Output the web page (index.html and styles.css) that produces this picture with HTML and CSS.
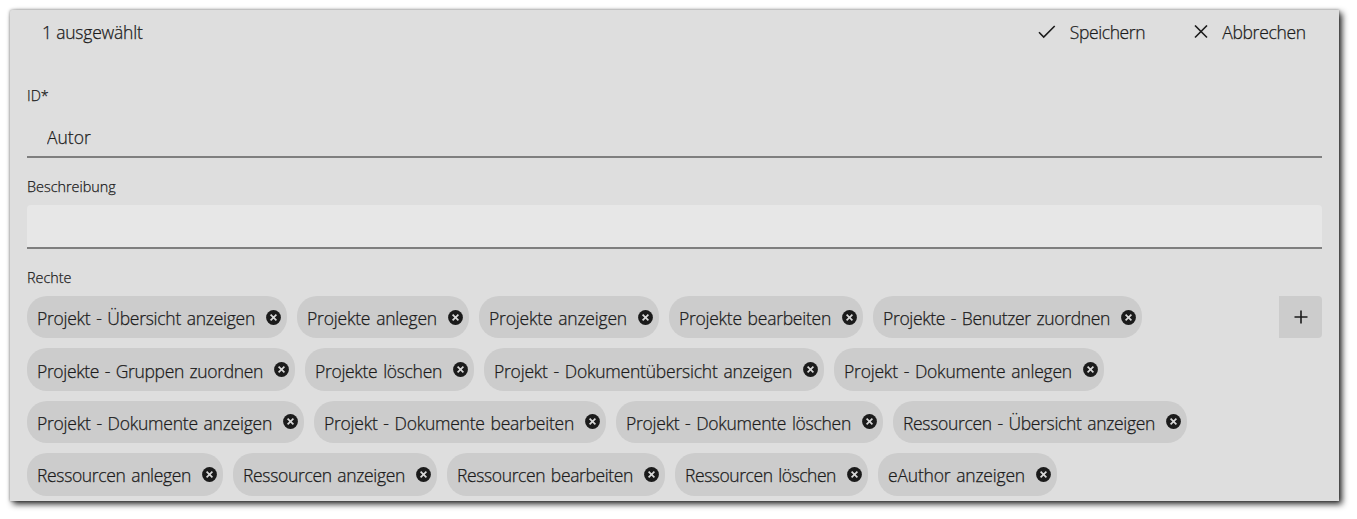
FILE: index.html
```html
<!DOCTYPE html>
<html lang="de">
<head>
    <meta charset="UTF-8">
    <meta name="viewport" content="width=device-width, initial-scale=1.0">
    <title>Autor</title>
    <link rel="stylesheet" href="styles.css">
</head>
<body>
    <svg class="sprite" width="0" height="0">
        <symbol id="remove" viewBox="0 0 15 15">
            <circle cx="7.5" cy="7.5" r="7.4" fill="#1b1b1b"/>
            <path d="M4.6 4.6l5.8 5.8M10.4 4.6l-5.8 5.8" stroke="#d8d8d8" stroke-width="1.7" fill="none"/>
        </symbol>
    </svg>

    <div class="panel">
        <div class="toolbar">
            <span class="selected">1 ausgewählt</span>
            <div class="actions">
                <button class="action">
                    <svg width="18" height="14" viewBox="0 0 18 14"><path d="M1 7.3l4.7 4.7L16.7 1"/></svg>
                    <span class="save">Speichern</span>
                </button>
                <button class="action">
                    <svg width="14" height="14" viewBox="0 0 14 14"><path d="M1 0.5l12 12M13 0.5L1 12.5"/></svg>
                    <span class="cancel">Abbrechen</span>
                </button>
            </div>
        </div>

        <div class="form">
            <label class="label" for="id">ID*</label>
            <input class="field readonly" id="id" value="Autor" readonly>

            <label class="label" for="description">Beschreibung</label>
            <input class="field" id="description">

            <div class="label">Rechte</div>
            <div class="rights">
                <div class="chips" id="chips"></div>
                <button class="add">
                    <svg width="14" height="14" viewBox="0 0 14 14"><path d="M7 0.5v13M0.5 7h13"/></svg>
                </button>
            </div>
        </div>
    </div>

    <script src="script.js"></script>
</body>
</html>
```
FILE: styles.css
```css
* {
    box-sizing: border-box;
}

body {
    margin: 0;
    padding: 10px 18px 18px 10px;
    height: 519px;
    overflow: hidden;
    background-color: #fff;
    color: #1b1b1b;
    font-family: "Open Sans", "Noto Sans", sans-serif;
    font-weight: 300;
    font-size: 17.5px;
    -webkit-text-stroke: 0.25px #1b1b1b;
}

.sprite {
    position: absolute;
}

.panel {
    height: 491px;
    background-color: #dedede;
    border-radius: 2px 0 0 0;
    box-shadow: 3px 3px 6px rgba(0, 0, 0, 0.85), 0 0 3px rgba(0, 0, 0, 0.4);
}

.toolbar {
    display: flex;
    justify-content: space-between;
    align-items: center;
    height: 44px;
    padding: 0 32px 0 32px;
}

.selected {
    letter-spacing: -0.2px;
}

.actions {
    display: flex;
    gap: 48px;
}

button {
    display: flex;
    align-items: center;
    padding: 0;
    border: none;
    background: none;
    color: inherit;
    font: inherit;
    cursor: pointer;
}

.action {
    gap: 13px;
}

.save {
    width: 77px;
    letter-spacing: -0.4px;
}

.cancel {
    width: 86px;
    letter-spacing: -0.3px;
}

button path {
    fill: none;
    stroke: #1b1b1b;
    stroke-width: 1.6;
}

.form {
    padding: 18px 17px 0;
}

.label {
    display: block;
    height: 47px;
    padding-top: 13px;
    font-size: 14.4px;
    line-height: 22px;
}

.form > .label:first-child {
    height: 42px;
}

.field + .label {
    padding-top: 18px;
}

.field {
    display: block;
    width: 100%;
    height: 44px;
    padding: 0 20px;
    border: none;
    border-bottom: 2px solid #7f7f7f;
    border-radius: 4px 4px 0 0;
    background-color: #e7e7e7;
    color: inherit;
    font: inherit;
    outline: none;
}

.field.readonly {
    padding-top: 4px;
    background-color: transparent;
}

.rights {
    display: flex;
    justify-content: space-between;
    align-items: flex-start;
}

.chips {
    display: flex;
    flex-direction: column;
    gap: 10px;
}

.chip-row {
    display: flex;
    gap: 10px;
}

.chip {
    display: flex;
    justify-content: space-between;
    align-items: center;
    height: 42.4px;
    padding: 0 6px 0 10px;
    border-radius: 20px;
    background-color: #cccccc;
    white-space: nowrap;
}

.chip svg {
    flex: none;
    width: 15px;
    height: 15px;
}

.chip span {
    padding-top: 2px;
    word-spacing: 1.5px;
}

.add {
    justify-content: center;
    width: 43px;
    height: 42px;
    border-radius: 0 4px 4px 0;
    background-color: #cccccc;
}
```
FILE: script.js
```js
// label and chip width in px
const rights = [
    [['Projekt - Übersicht anzeigen', 260], ['Projekte anlegen', 172], ['Projekte anzeigen', 180], ['Projekte bearbeiten', 194], ['Projekte - Benutzer zuordnen', 269]],
    [['Projekte - Gruppen zuordnen', 268], ['Projekte löschen', 169], ['Projekt - Dokumentübersicht anzeigen', 340], ['Projekt - Dokumente anlegen', 270]],
    [['Projekt - Dokumente anzeigen', 277], ['Projekt - Dokumente bearbeiten', 292], ['Projekt - Dokumente löschen', 267], ['Ressourcen - Übersicht anzeigen', 294]],
    [['Ressourcen anlegen', 196], ['Ressourcen anzeigen', 204], ['Ressourcen bearbeiten', 218], ['Ressourcen löschen', 193], ['eAuthor anzeigen', 179]]
];

const chips = document.getElementById('chips');

rights.forEach(items => {
    const row = document.createElement('div');
    row.className = 'chip-row';
    items.forEach(([label, width]) => {
        const chip = document.createElement('div');
        chip.className = 'chip';
        chip.style.width = `${width}px`;
        chip.innerHTML = `<span>${label}</span><svg><use href="#remove"/></svg>`;
        row.appendChild(chip);
    });
    chips.appendChild(row);
});

// spread each label so it ends 12px before its remove icon
document.querySelectorAll('.chip').forEach(chip => {
    const text = chip.firstChild;
    const space = chip.offsetWidth - 42 - text.getBoundingClientRect().width;
    text.style.letterSpacing = `${space / text.textContent.length}px`;
});
```
